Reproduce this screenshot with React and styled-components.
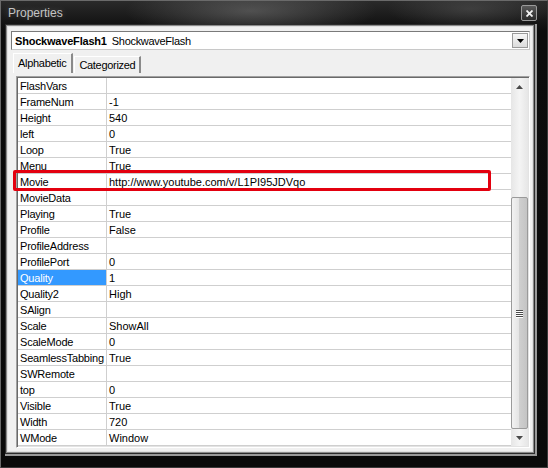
import React from "react";
import styled, { createGlobalStyle } from "styled-components";

const Global = createGlobalStyle`
  html, body { margin: 0; padding: 0; background: #000; }
  body { font-family: "Liberation Sans", Arial, sans-serif; }
`;

const Window = styled.div`
  width: 548px;
  height: 468px;
  box-sizing: border-box;
  display: flex;
  flex-direction: column;
  background:
    radial-gradient(ellipse 180px 40px at 250px 10px, rgba(120,120,120,0.55), rgba(0,0,0,0) 70%),
    radial-gradient(ellipse 120px 30px at 470px 8px, rgba(90,90,90,0.5), rgba(0,0,0,0) 70%),
    linear-gradient(180deg, #2a2a2a 0%, #0c0c0c 30px, #0a0a0a 100%);
  border: 1px solid #6a6a6a;
  border-right-color: #3a3a3a;
  border-bottom-color: #3a3a3a;
  overflow: hidden;
`;

const TitleBar = styled.div`
  height: 24px;
  flex: none;
  display: flex;
  align-items: center;
  justify-content: space-between;
  padding: 0 10px 0 7px;
`;

const Title = styled.span`
  font-size: 12px;
  color: #c4c4c4;
  text-shadow: 0 0 6px rgba(255,255,255,0.25);
`;

const CloseButton = styled.div`
  width: 16px;
  height: 16px;
  box-sizing: border-box;
  border: 1px solid #9a9a9a;
  border-radius: 2px;
  background: linear-gradient(180deg, #5a5a5a, #2a2a2a);
  display: flex;
  align-items: center;
  justify-content: center;
`;

const Frame = styled.div`
  flex: 1;
  margin: 0 13px 14px 5px;
  border: 1px solid #8a8a8a;
  box-shadow: 0 0 0 1px #2c2c2c, 1px 1px 0 2px #9a9a9a;
  display: flex;
`;

const Panel = styled.div`
  flex: 1;
  background: #f0f0f0;
  border: 1px solid #e0e0e0;
  display: flex;
  flex-direction: column;
  padding: 4px 2px 3px 3px;
`;

const Combo = styled.div`
  height: 19px;
  box-sizing: border-box;
  background: #fff;
  border: 1px solid #7a7a7a;
  border-right-color: #c8c8c8;
  border-bottom-color: #c8c8c8;
  display: flex;
  align-items: center;
  padding-left: 3px;
  font-size: 11px;
  color: #000;
`;

const ComboName = styled.b`
  margin-right: 5px;
  letter-spacing: -0.2px;
`;

const ComboType = styled.span`
  flex: 1;
  letter-spacing: -0.3px;
`;

const DropButton = styled.div`
  width: 16px;
  height: 15px;
  box-sizing: border-box;
  margin-right: 1px;
  background: linear-gradient(180deg, #f6f6f6, #dcdcdc);
  border: 1px solid #9a9a9a;
  display: flex;
  align-items: center;
  justify-content: center;
`;

const TabStrip = styled.div`
  height: 20px;
  display: flex;
  align-items: flex-end;
  padding-left: 2px;
  margin-top: 3px;
`;

const Tab = styled.div`
  height: ${(p) => (p.$active ? "20px" : "17px")};
  box-sizing: border-box;
  padding: 0 ${(p) => (p.$active ? "5px" : "4px")} 0 4px;
  display: flex;
  align-items: center;
  font-size: 11px;
  letter-spacing: -0.3px;
  color: #000;
  background: #f0f0f0;
  border-left: 1px solid #ffffff;
  border-top: 1px solid #ffffff;
  border-right: 2px solid #8a8a8a;
  margin-left: ${(p) => (p.$active ? "0" : "1px")};
  padding-bottom: ${(p) => (p.$active ? "2px" : "0")};
`;

const Grid = styled.div`
  margin: 3px 0 0 5px;
  height: 372px;
  box-sizing: border-box;
  display: flex;
  position: relative;
  background: #fff;
  border-top: 1px solid #a0a0a0;
  border-left: 1px solid #a0a0a0;
  border-right: 1px solid #fff;
  border-bottom: 1px solid #fff;
  box-shadow: inset 1px 1px 0 #696969, inset -1px -1px 0 #e3e3e3;
  padding: 1px;
`;

const Rows = styled.div`
  flex: 1;
  display: flex;
  flex-direction: column;
`;

const Row = styled.div`
  height: 16px;
  flex: none;
  box-sizing: border-box;
  display: flex;
  border-bottom: 1px solid #cfcfcf;
  font-size: 11px;
  color: #000;
`;

const NameCell = styled.div`
  width: 89px;
  box-sizing: border-box;
  padding: 1px 0 0 2px;
  border-right: 1px solid #cfcfcf;
  display: flex;
  align-items: center;
  white-space: nowrap;
  overflow: hidden;
  letter-spacing: -0.2px;
  background: ${(p) => (p.$selected ? "#3399ff" : "transparent")};
  color: ${(p) => (p.$selected ? "#fff" : "#000")};
`;

const ValueCell = styled.div`
  flex: 1;
  padding: 1px 0 0 2px;
  display: flex;
  align-items: center;
  white-space: nowrap;
`;

const Scrollbar = styled.div`
  width: 17px;
  flex: none;
  display: flex;
  flex-direction: column;
  background: linear-gradient(90deg, #e6e6e6, #f4f4f4 50%, #e6e6e6);
`;

const ArrowButton = styled.div`
  height: 17px;
  flex: none;
  display: flex;
  align-items: center;
  justify-content: center;
`;

const Spacer = styled.div`
  flex: 1;
`;

const Thumb = styled.div`
  margin-top: ${(p) => p.$top}px;
  height: ${(p) => p.$height}px;
  box-sizing: border-box;
  border: 1px solid #9a9a9a;
  border-radius: 2px;
  background: linear-gradient(90deg, #f2f2f2 0%, #e4e4e4 45%, #cfcfcf 50%, #c4c4c4 100%);
  display: flex;
  align-items: center;
  justify-content: center;
`;

const Grip = styled.div`
  width: 7px;
  display: flex;
  flex-direction: column;
  gap: 1px;
`;

const GripLine = styled.div`
  height: 1px;
  background: #4a4a4a;
  box-shadow: 0 1px 0 #fff;
`;

const Highlight = styled.div`
  position: absolute;
  left: -4px;
  top: 93px;
  width: 478px;
  height: 21px;
  box-sizing: border-box;
  border: 3px solid #e3000f;
  border-radius: 2px;
  pointer-events: none;
`;

const rows = [
  ["FlashVars", ""],
  ["FrameNum", "-1"],
  ["Height", "540"],
  ["left", "0"],
  ["Loop", "True"],
  ["Menu", "True"],
  ["Movie", "http://www.youtube.com/v/L1PI95JDVqo"],
  ["MovieData", ""],
  ["Playing", "True"],
  ["Profile", "False"],
  ["ProfileAddress", ""],
  ["ProfilePort", "0"],
  ["Quality", "1"],
  ["Quality2", "High"],
  ["SAlign", ""],
  ["Scale", "ShowAll"],
  ["ScaleMode", "0"],
  ["SeamlessTabbing", "True"],
  ["SWRemote", ""],
  ["top", "0"],
  ["Visible", "True"],
  ["Width", "720"],
  ["WMode", "Window"],
];

export default function App() {
  return (
    <>
      <Global />
      <Window>
        <TitleBar>
          <Title>Properties</Title>
          <CloseButton>
            <svg width="7" height="7" viewBox="0 0 7 7">
              <path d="M0.5 0.5 L6.5 6.5 M6.5 0.5 L0.5 6.5" stroke="#f2f2f2" strokeWidth="1.8" />
            </svg>
          </CloseButton>
        </TitleBar>
        <Frame>
          <Panel>
            <Combo>
              <ComboName>ShockwaveFlash1</ComboName>
              <ComboType>ShockwaveFlash</ComboType>
              <DropButton>
                <svg width="7" height="4" viewBox="0 0 7 4">
                  <path d="M0 0 L7 0 L3.5 4 Z" fill="#000" />
                </svg>
              </DropButton>
            </Combo>
            <TabStrip>
              <Tab $active>Alphabetic</Tab>
              <Tab>Categorized</Tab>
            </TabStrip>
            <Grid>
              <Rows>
                {rows.map(([name, value]) => (
                  <Row key={name}>
                    <NameCell $selected={name === "Quality"}>{name}</NameCell>
                    <ValueCell>{value}</ValueCell>
                  </Row>
                ))}
              </Rows>
              <Scrollbar>
                <ArrowButton>
                  <svg width="7" height="4" viewBox="0 0 7 4">
                    <path d="M0 4 L7 4 L3.5 0 Z" fill="#4a4a4a" />
                  </svg>
                </ArrowButton>
                <Thumb $top={102} $height={232}>
                  <Grip>
                    <GripLine />
                    <GripLine />
                    <GripLine />
                    <GripLine />
                  </Grip>
                </Thumb>
                <Spacer />
                <ArrowButton>
                  <svg width="7" height="4" viewBox="0 0 7 4">
                    <path d="M0 0 L7 0 L3.5 4 Z" fill="#4a4a4a" />
                  </svg>
                </ArrowButton>
              </Scrollbar>
              <Highlight />
            </Grid>
          </Panel>
        </Frame>
      </Window>
    </>
  );
}
